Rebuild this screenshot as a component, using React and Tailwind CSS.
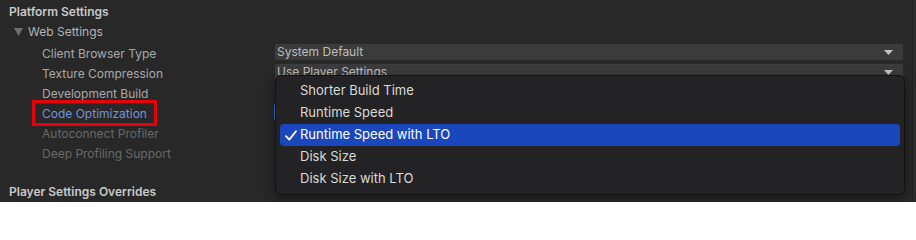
import React from "react";

const rows = [
  { label: "Client Browser Type", kind: "select", value: "System Default" },
  { label: "Texture Compression", kind: "select", value: "Use Player Settings" },
  { label: "Development Build", kind: "check" },
  { label: "Code Optimization", kind: "select", value: "", focus: true },
  { label: "Autoconnect Profiler", kind: "check", disabled: true },
  { label: "Deep Profiling Support", kind: "check", disabled: true },
];

const options = [
  "Shorter Build Time",
  "Runtime Speed",
  "Runtime Speed with LTO",
  "Disk Size",
  "Disk Size with LTO",
];

function Caret() {
  return (
    <svg width="9" height="5" viewBox="0 0 9 5" className="shrink-0">
      <path d="M0 0h9L4.5 5z" fill="#c4c4c4" />
    </svg>
  );
}

function SelectField({ value, focus }) {
  return (
    <div
      className={`flex h-[18px] w-[630px] items-center rounded-[3px] border pl-[2px] pr-[10px] ${
        focus ? "border-[#3a72d6] bg-[#3b3b3b]" : "border-[#2a2a2a] bg-[#3b3b3b]"
      }`}
    >
      <span className="flex-1 whitespace-nowrap text-[12px] leading-[16px] text-[#bdbdbd]">{value}</span>
      <Caret />
    </div>
  );
}

function Row({ row }) {
  const labelColor = row.focus
    ? "text-[#7196d8]"
    : row.disabled
    ? "text-[#696969]"
    : "text-[#a9a9a9]";
  return (
    <div className="flex h-5 items-center">
      <div className="w-[274px] shrink-0 pl-[42px]">
        <span className={`relative text-[12px] ${labelColor}`}>
          {row.label}
          {row.focus && (
            <span className="absolute -bottom-[5px] -left-[10px] -right-[10px] -top-[6px] border-[3px] border-[#e8000b]" />
          )}
        </span>
      </div>
      {row.kind === "select" ? (
        <SelectField value={row.value} focus={row.focus} />
      ) : (
        <div className="ml-[-1px] h-[14px] w-[14px] rounded-[3px] border border-[#232323] bg-[#2e2e2e]" />
      )}
    </div>
  );
}

function Check() {
  return (
    <svg width="12" height="11" viewBox="0 0 12 11" className="ml-[5px]">
      <path
        d="M1 6.2L4.3 9.6L11 1.2"
        fill="none"
        stroke="#ffffff"
        strokeWidth="1.8"
        strokeLinecap="round"
        strokeLinejoin="round"
      />
    </svg>
  );
}

function Popup() {
  return (
    <div className="absolute left-[275px] top-[75px] w-[630px] rounded-[6px] border border-[#121212] bg-[#232325] px-[4px] py-[4px] shadow-[0_4px_12px_rgba(0,0,0,0.4)]">
      {options.map((opt) => {
        const active = opt === "Runtime Speed with LTO";
        return (
          <div
            key={opt}
            className={`flex h-[22px] items-center rounded-[4px] ${
              active ? "bg-[#1b47bd] text-white" : "text-[#dadada]"
            }`}
          >
            <span className="flex w-[20px] items-center">{active && <Check />}</span>
            <span className="text-[13px]">{opt}</span>
          </div>
        );
      })}
    </div>
  );
}

export default function App() {
  return (
    <div
      className="relative flex h-[202px] w-[916px] overflow-hidden bg-[#282828]"
      style={{ fontFamily: "Inter, 'Noto Sans', sans-serif" }}
    >
      <div className="flex-1">
        <div className="flex h-[22px] items-center pl-[9px] pt-[1px] text-[12px] font-semibold text-[#c8c8c8]">
          Platform Settings
        </div>
        <div className="flex h-5 items-center pl-[14px] text-[12px] text-[#b4b4b4]">
          <svg width="9" height="8" viewBox="0 0 9 8" className="mr-[5px]">
            <path d="M0 0h9L4.5 8z" fill="#6e6e6e" />
          </svg>
          Web Settings
        </div>
        {rows.map((row) => (
          <Row key={row.label} row={row} />
        ))}
        <div className="mt-[20px] flex h-5 items-center pl-[9px] text-[12px] font-semibold text-[#c8c8c8]">
          Player Settings Overrides
        </div>
      </div>
      <div className="w-[4px] border-l border-[#222] bg-[#2c2c2c]" />
      <Popup />
    </div>
  );
}
